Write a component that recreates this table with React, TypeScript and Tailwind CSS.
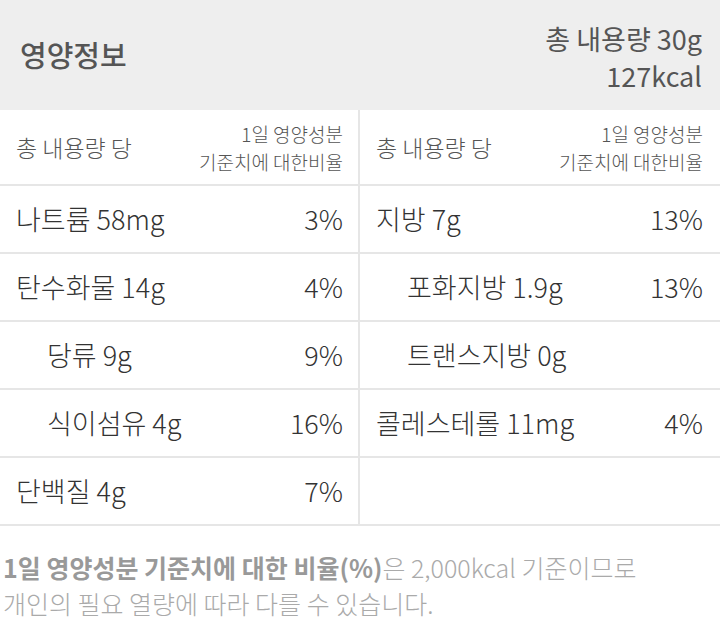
import React from "react";

type Cell = { name: string; pct?: string; indent?: boolean } | null;

const rows: [Cell, Cell][] = [
  [{ name: "나트륨 58mg", pct: "3%" }, { name: "지방 7g", pct: "13%" }],
  [{ name: "탄수화물 14g", pct: "4%" }, { name: "포화지방 1.9g", pct: "13%", indent: true }],
  [{ name: "당류 9g", pct: "9%", indent: true }, { name: "트랜스지방 0g", indent: true }],
  [{ name: "식이섬유 4g", pct: "16%", indent: true }, { name: "콜레스테롤 11mg", pct: "4%" }],
  [{ name: "단백질 4g", pct: "7%" }, null],
];

const font = { fontFamily: '"Noto Sans CJK KR", "Noto Sans", sans-serif' };

const DataCell = ({ cell, left }: { cell: Cell; left: boolean }) => (
  <div
    className={
      "flex h-[68px] items-center justify-between border-b-2 border-[#e6e6e6] pl-4 text-[27px] font-light text-[#333] " +
      (left ? "border-r-2 pr-[15px]" : "pr-[17px]")
    }
  >
    {cell && (
      <>
        <span className={cell.indent ? "pl-[31px]" : ""}>{cell.name}</span>
        <span>{cell.pct}</span>
      </>
    )}
  </div>
);

const HeadCell = ({ left }: { left: boolean }) => (
  <div
    className={
      "flex h-[76px] items-center justify-between border-b-2 border-[#e6e6e6] pl-4 font-light text-[#555] " +
      (left ? "border-r-2 pr-[15px]" : "pr-[17px]")
    }
  >
    <span className="text-[23px]">총 내용량 당</span>
    <span className="pt-[2px] text-right text-[19px] leading-[28px]">
      1일 영양성분
      <br />
      기준치에 대한비율
    </span>
  </div>
);

export default function App() {
  return (
    <div className="w-[720px] bg-white" style={font}>
      <div className="flex h-[110px] items-center justify-between bg-[#eeeeee] pl-5 pr-[18px]">
        <h1 className="text-[29px] font-medium text-[#555]">영양정보</h1>
        <div className="pt-1 text-right text-[27px] leading-[37px] text-[#555]">
          <div>총 내용량 30g</div>
          <div>127kcal</div>
        </div>
      </div>

      <div className="grid grid-cols-[360px_1fr]">
        <HeadCell left />
        <HeadCell left={false} />
        {rows.map(([l, r], i) => (
          <React.Fragment key={i}>
            <DataCell cell={l} left />
            <DataCell cell={r} left={false} />
          </React.Fragment>
        ))}
      </div>

      <p className="pl-[3px] pt-[23px] text-[25px] font-light leading-[36px] text-[#aaa]">
        <span className="font-bold text-[#999]">1일 영양성분 기준치에 대한 비율(%)</span>은 2,000kcal 기준이므로
        <br />
        개인의 필요 열량에 따라 다를 수 있습니다.
      </p>
    </div>
  );
}
